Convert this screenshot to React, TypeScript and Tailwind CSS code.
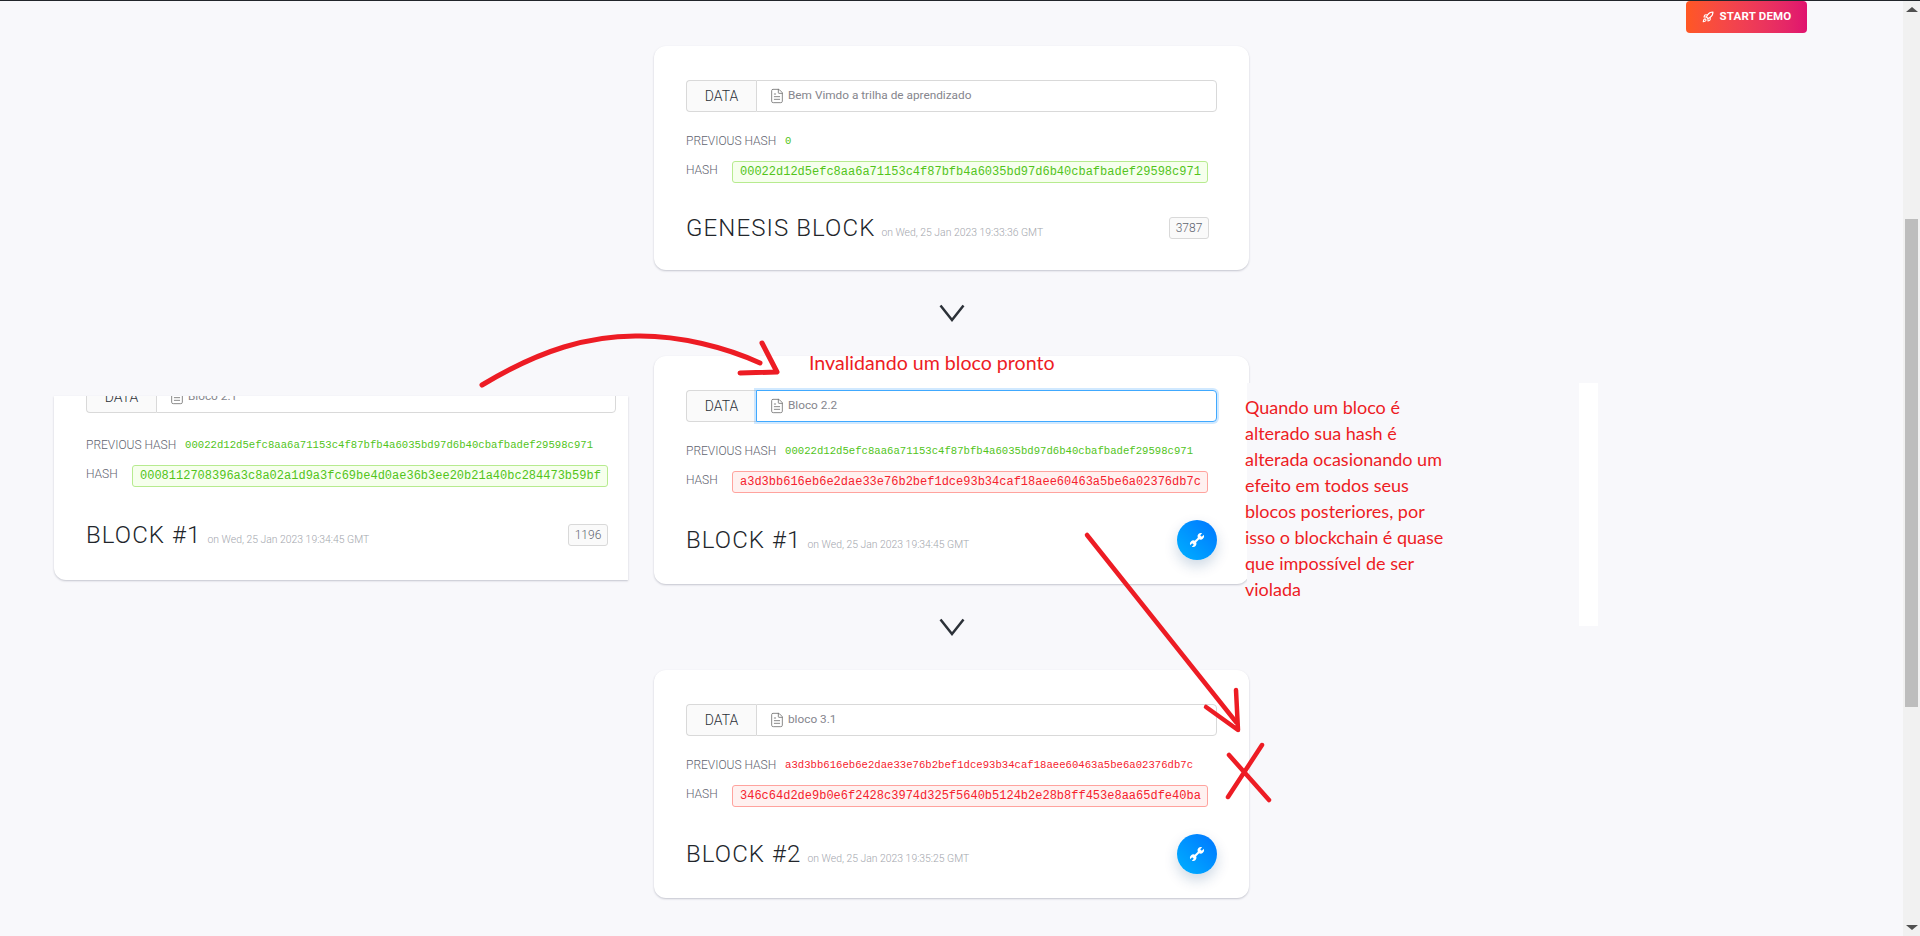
import { FileText, Rocket } from "lucide-react";

const din = "font-['Roboto',sans-serif]";

type Block = {
  title: string;
  date: string;
  data: string;
  prev: string;
  prevValid: boolean;
  hash: string;
  valid: boolean;
  nonce?: string;
  focused?: boolean;
};

const blocks: Block[] = [
  {
    title: "GENESIS BLOCK",
    date: "on Wed, 25 Jan 2023 19:33:36 GMT",
    data: "Bem Vimdo a trilha de aprendizado",
    prev: "0",
    prevValid: true,
    hash: "00022d12d5efc8aa6a71153c4f87bfb4a6035bd97d6b40cbafbadef29598c971",
    valid: true,
    nonce: "3787",
  },
  {
    title: "BLOCK #1",
    date: "on Wed, 25 Jan 2023 19:34:45 GMT",
    data: "Bloco 2.2",
    prev: "00022d12d5efc8aa6a71153c4f87bfb4a6035bd97d6b40cbafbadef29598c971",
    prevValid: true,
    hash: "a3d3bb616eb6e2dae33e76b2bef1dce93b34caf18aee60463a5be6a02376db7c",
    valid: false,
    focused: true,
  },
  {
    title: "BLOCK #2",
    date: "on Wed, 25 Jan 2023 19:35:25 GMT",
    data: "bloco 3.1",
    prev: "a3d3bb616eb6e2dae33e76b2bef1dce93b34caf18aee60463a5be6a02376db7c",
    prevValid: false,
    hash: "346c64d2de9b0e6f2428c3974d325f5640b5124b2e28b8ff453e8aa65dfe40ba",
    valid: false,
  },
];

function Spanner() {
  return (
    <svg viewBox="0 0 16 16" className="h-4 w-4" fill="white">
      <path d="M5 9.6 9.6 5l1.4 1.4L6.4 11z" />
      <path d="M13.2 1.2 11.2 3.2 12.8 4.8 14.8 2.8A3.4 3.4 0 0 1 9.8 7L8.9 5.9A3.4 3.4 0 0 1 13.2 1.2z" />
      <path d="M2.8 14.8 4.8 12.8 3.2 11.2 1.2 13.2A3.4 3.4 0 0 1 6.2 9L7.1 10.1A3.4 3.4 0 0 1 2.8 14.8z" />
    </svg>
  );
}

function DataInput({ value, focused, className }: { value: string; focused?: boolean; className?: string }) {
  return (
    <div className={`flex h-8 text-[14px] font-light text-[#2c3138] ${className ?? ""}`}>
      <div className="flex w-[70px] shrink-0 items-center justify-center rounded-l-[4px] border border-r-0 border-[#d9d9d9] bg-[#fafafa]">DATA</div>
      <div
        className={
          focused
            ? "flex flex-1 items-center gap-[3px] rounded-r-[4px] border border-[#40a9ff] bg-white pl-[12px] text-[11.8px] font-normal text-[#85858d] shadow-[0_0_0_2px_rgba(24,144,255,0.2)]"
            : "flex flex-1 items-center gap-[3px] rounded-r-[4px] border border-[#d9d9d9] bg-white pl-[12px] text-[11.8px] font-normal text-[#85858d]"
        }
      >
        <FileText className="h-4 w-4 text-[#6b6b6b]" strokeWidth={1.2} />
        {value}
      </div>
    </div>
  );
}

function HashRows({ prev, prevValid, hash, valid, className }: { prev: string; prevValid: boolean; hash: string; valid: boolean; className?: string }) {
  return (
    <div className={className}>
      <div className="flex h-[18px] items-center">
        <span className="w-[99px] shrink-0 text-[12px] font-light text-[#5f6470]">PREVIOUS HASH</span>
        <span className={`mt-[2px] font-['Liberation_Mono',monospace] text-[10.63px] ${prevValid ? "text-[#52c41a]" : "text-[#f5222d]"}`}>{prev}</span>
      </div>
      <div className="mt-[11px] flex items-start">
        <span className="w-[46px] shrink-0 text-[12px] font-light leading-[18px] text-[#5f6470]">HASH</span>
        <span
          className={
            valid
              ? "flex h-[22px] w-[476px] items-center rounded-[3px] border border-[#b7eb8f] bg-[#f6ffed] pl-[7px] font-['Liberation_Mono',monospace] text-[12px] text-[#52c41a]"
              : "flex h-[22px] w-[476px] items-center rounded-[3px] border border-[#ffa39e] bg-[#fff1f0] pl-[7px] font-['Liberation_Mono',monospace] text-[12px] text-[#f5222d]"
          }
        >
          {hash}
        </span>
      </div>
    </div>
  );
}

function Footer({ title, date, nonce }: { title: string; date: string; nonce?: string }) {
  return (
    <div className="flex items-center justify-between">
      <div className="flex items-baseline gap-[6px]">
        <span className="text-[24px] font-light tracking-[1.1px] text-[#22262b]">{title}</span>
        <span className="text-[10.4px] font-light text-[#a3a6ad]">{date}</span>
      </div>
      {nonce ? (
        <span className="mr-[8px] flex h-[22px] w-[40px] items-center justify-center rounded-[3px] border border-[#d9d9d9] bg-[#fafafa] text-[12px] font-light text-[#5f6470]">{nonce}</span>
      ) : (
        <button className="flex h-10 w-10 items-center justify-center rounded-full bg-gradient-to-bl from-[#0074ff] to-[#00b0ff] shadow-[0_6px_14px_rgba(0,60,120,0.2)]">
          <Spanner />
        </button>
      )}
    </div>
  );
}

function BlockCard({ block }: { block: Block }) {
  return (
    <div className={`rounded-[12px] bg-white px-[32px] pb-[24px] pt-[34px] shadow-[0_1px_2px_rgba(60,64,90,0.28)] ${din}`}>
      <DataInput value={block.data} focused={block.focused} />
      <HashRows prev={block.prev} prevValid={block.prevValid} hash={block.hash} valid={block.valid} className="mt-[20px]" />
      <div className={block.nonce ? "mt-[27px] flex h-[36px] flex-col justify-center" : "mt-[27px] flex h-[40px] flex-col justify-center"}>
        <Footer title={block.title} date={block.date} nonce={block.nonce} />
      </div>
    </div>
  );
}

function Chevron() {
  return (
    <div className="flex h-[86px] items-center justify-center">
      <svg width="26" height="18" viewBox="0 0 26 18" fill="none" stroke="#2c3138" strokeWidth="2.5">
        <path d="M1.5 1.5 13 16 24.5 1.5" />
      </svg>
    </div>
  );
}

export default function App() {
  return (
    <div className="relative h-[936px] w-[1920px] overflow-hidden bg-[#f8f8fb]">
      <div className="h-px bg-[#22262b]" />
      <div className="flex h-[935px]">
        <main className="flex-1">
          <div className="mx-auto w-[595px] pt-[45px]">
            {blocks.map((b, i) => (
              <div key={b.title}>
                {i > 0 && <Chevron />}
                <BlockCard block={b} />
              </div>
            ))}
          </div>
        </main>
        {/* fake scrollbar */}
        <div className="flex w-[17px] flex-col items-center justify-between bg-[#f1f1f1] py-[6px]">
          <div className="h-0 w-0 border-x-[6px] border-b-[5px] border-x-transparent border-b-[#505050]" />
          <div className="h-0 w-0 border-x-[6px] border-t-[5px] border-x-transparent border-t-[#505050]" />
        </div>
      </div>

      <div className="absolute left-[1905px] top-[219px] h-[488px] w-[13px] bg-[#bdbdbd]" />

      <button className={`absolute left-[1686px] top-px flex h-[32px] w-[121px] items-center justify-center gap-[6px] rounded-[4px] bg-gradient-to-r from-[#ff5722] to-[#e0126f] text-[11.5px] font-bold tracking-[0.2px] text-white ${din}`}>
        <Rocket className="h-[12px] w-[12px]" strokeWidth={2.2} />
        START DEMO
      </button>

      {/* pasted crop of the previous state of block #1 */}
      <div className={`absolute left-[54px] top-[396px] h-[184px] w-[574px] overflow-hidden rounded-bl-[12px] bg-white pl-[32px] pr-[12px] shadow-[0_1px_2px_rgba(60,64,90,0.28)] ${din}`}>
        <DataInput value="Bloco 2.1" className="-mt-[15px]" />
        <HashRows prev={blocks[0].hash} prevValid hash="0008112708396a3c8a02a1d9a3fc69be4d0ae36b3ee20b21a40bc284473b59bf" valid className="mt-[23px]" />
        <div className="mt-[30px] flex h-[36px] w-[530px] flex-col justify-center">
          <Footer title="BLOCK #1" date="on Wed, 25 Jan 2023 19:34:45 GMT" nonce="1196" />
        </div>
      </div>

      {/* annotations */}
      <svg className="pointer-events-none absolute left-0 top-0 h-[936px] w-[1920px]" viewBox="0 0 1920 936" fill="none" stroke="#ed1c24" strokeLinecap="round" strokeLinejoin="round">
        <path d="M482 385C540 350 590 335 640 336C680 336 725 347 760 363" strokeWidth="5" />
        <path d="M762 343 777 372 740 373" strokeWidth="5" />
        <path d="M1087 535 1236 722" strokeWidth="4.5" />
        <path d="M1236 690 1238 730 1206 707" strokeWidth="4.5" />
        <path d="M1229 755 1269 800M1262 745 1228 797" strokeWidth="4.5" />
      </svg>

      <div className="absolute left-[809px] top-[351px] font-['Lato',sans-serif] text-[19.6px] leading-[24px] text-[#ed1c24]">Invalidando um bloco pronto</div>

      <div className="absolute left-[1247px] top-[383px] flex h-[243px] w-[351px]">
        <div className="w-[332px] bg-[#f8f8fb] pt-[11px] font-['Lato',sans-serif] text-[18px] leading-[26px] text-[#ed1c24]">
          <div className="-ml-[2px] w-[212px]">
            Quando um bloco é alterado sua hash é alterada ocasionando um efeito em todos seus blocos posteriores, por isso o blockchain é quase que impossível de ser violada
          </div>
        </div>
        <div className="w-[19px] bg-white" />
      </div>
    </div>
  );
}
